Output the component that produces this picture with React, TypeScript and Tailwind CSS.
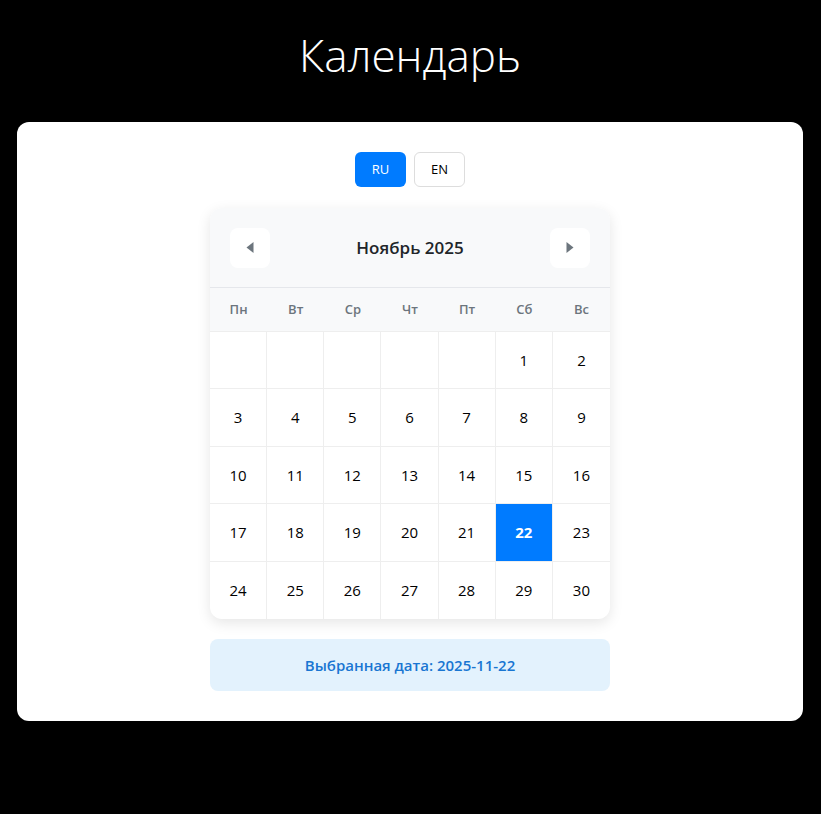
import { useState } from 'react'

const WEEKDAYS = ['Пн', 'Вт', 'Ср', 'Чт', 'Пт', 'Сб', 'Вс']

export default function App() {
  const [lang, setLang] = useState<'ru' | 'en'>('ru')
  const [selected, setSelected] = useState(22)

  // ноябрь 2025 начинается с субботы
  const cells: (number | null)[] = [null, null, null, null, null]
  for (let d = 1; d <= 30; d++) cells.push(d)

  return (
    <main className="min-h-[814px] bg-black pl-[17px] pr-[18px] pt-[26px] pb-[94px] font-['Open_Sans','Noto_Sans',sans-serif]">
      <h1 className="text-center text-[44px] leading-[58px] font-light text-white mb-[38px]">Календарь</h1>

      <div className="bg-white rounded-xl p-[30px] flex flex-col items-center">
        <div className="flex gap-2">
          <button
            onClick={() => setLang('ru')}
            className={
              lang === 'ru'
                ? 'w-[51px] h-[35px] rounded-md bg-[#007bff] text-white text-[13px]'
                : 'w-[51px] h-[35px] rounded-md border border-[#ddd] bg-white text-black text-[13px]'
            }
          >
            RU
          </button>
          <button
            onClick={() => setLang('en')}
            className={
              lang === 'en'
                ? 'w-[51px] h-[35px] rounded-md bg-[#007bff] text-white text-[13px]'
                : 'w-[51px] h-[35px] rounded-md border border-[#ddd] bg-white text-black text-[13px]'
            }
          >
            EN
          </button>
        </div>

        <div className="mt-[21px] w-[400px] rounded-xl bg-white shadow-[0_4px_14px_rgba(0,0,0,0.1)] overflow-hidden">
          <div className="h-[80px] bg-[#f8f9fa] border-b border-[#e5e7eb] flex items-center justify-between px-5">
            <button className="w-10 h-10 rounded-lg bg-white flex items-center justify-center">
              <svg width="10" height="13" viewBox="0 0 10 13">
                <path d="M8.5 1 L1.5 6.5 L8.5 12 Z" fill="#6c757d" />
              </svg>
            </button>
            <span className="text-[17px] font-semibold text-[#212529]">Ноябрь 2025</span>
            <button className="w-10 h-10 rounded-lg bg-white flex items-center justify-center">
              <svg width="10" height="13" viewBox="0 0 10 13">
                <path d="M1.5 1 L8.5 6.5 L1.5 12 Z" fill="#6c757d" />
              </svg>
            </button>
          </div>

          <div className="grid grid-cols-7 bg-[#f8f9fa] border-b border-[#eee]">
            {WEEKDAYS.map((w) => (
              <div key={w} className="h-[43px] flex items-center justify-center text-[13px] font-semibold text-[#6c757d]">
                {w}
              </div>
            ))}
          </div>

          <div className="grid grid-cols-7">
            {cells.map((d, i) => {
              const lastCol = i % 7 === 6
              const lastRow = i >= 28
              const base = 'h-[57.4px] flex items-center justify-center text-[15px] border-[#eee]'
              const borders = (lastCol ? '' : ' border-r') + (lastRow ? '' : ' border-b')
              if (d === null) return <div key={i} className={base + borders} />
              const isSel = d === selected
              return (
                <div
                  key={i}
                  onClick={() => setSelected(d)}
                  className={
                    base +
                    borders +
                    (isSel ? ' bg-[#007bff] text-white font-bold' : ' text-black cursor-pointer')
                  }
                >
                  {d}
                </div>
              )
            })}
          </div>
        </div>

        <div className="mt-5 w-[400px] h-[52px] rounded-lg bg-[#e3f2fd] flex items-center justify-center text-[15px] font-semibold text-[#1976d2]">
          Выбранная дата: 2025-11-{String(selected).padStart(2, '0')}
        </div>
      </div>
    </main>
  )
}
